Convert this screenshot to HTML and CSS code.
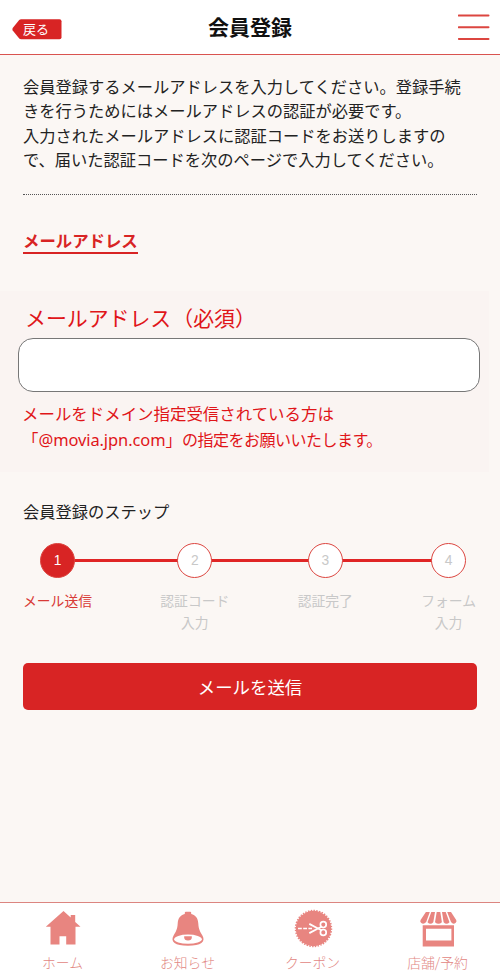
FILE: index.html
```html
<!DOCTYPE html>
<html lang="ja">
<head>
<meta charset="utf-8">
<meta name="viewport" content="width=device-width, initial-scale=1">
<title>会員登録</title>
<link rel="stylesheet" href="styles.css">
</head>
<body>
<header class="header">
  <a class="back" href="#">
    <svg class="back-shape" viewBox="0 0 50 21" aria-hidden="true"><path d="M7.2 1Q8 .2 9.2 .2H47.500Q49.500 .2 49.500 2.200V18.300Q49.500 20.300 47.500 20.300H9.200Q8 20.300 7.200 19.500L.7 11.500Q0 10.300 .7 9Z"/></svg>
    <span class="back-text">戻る</span>
  </a>
  <h1 class="title">会員登録</h1>
  <button class="menu" aria-label="メニュー"><svg viewBox="0 0 32 28" width="32" height="28"><path d="M.8 2.500H30.500M.8 14.200H30.500M.8 25.900H30.500"/></svg></button>
</header>
<main class="main">
  <p class="intro">会員登録するメールアドレスを入力してください。登録手続<br>きを行うためにはメールアドレスの認証が必要です。<br>入力されたメールアドレスに認証コードをお送りしますの<br>で、届いた認証コードを次のページで入力してください。</p>
  <h2 class="section-title">メールアドレス</h2>
  <section class="panel">
    <label class="label" for="mail">メールアドレス<span class="required">（必須）</span></label>
    <input class="input" id="mail" type="email">
    <p class="hint">メールをドメイン指定受信されている方は<br>「<span class="domain">@movia.jpn.com</span>」<span class="tight">の指定をお願いいたします。</span></p>
  </section>
  <h3 class="steps-title">会員登録のステップ</h3>
  <ol class="steps">
    <li class="step current"><span class="num">1</span><span class="name">メール送信</span></li>
    <li class="step"><span class="num">2</span><span class="name">認証コード<br>入力</span></li>
    <li class="step"><span class="num">3</span><span class="name">認証完了</span></li>
    <li class="step"><span class="num">4</span><span class="name">フォーム<br>入力</span></li>
  </ol>
  <button class="submit">メールを送信</button>
</main>
<nav class="tabs">
  <a class="tab" href="#">
    <svg class="icon" viewBox="0 0 40 40"><path d="M20.500 3 2.800 18.700H7.500V36.600H16.500V28.300H23.200V36.600H32.500V18.700H37.500L32.200 14V7H27.700V9.500Z"/></svg>
    <span>ホーム</span>
  </a>
  <a class="tab" href="#">
    <svg class="icon" viewBox="0 0 40 40"><path d="M16.800 6V4.700Q16.800 3.700 17.800 3.700H22.200Q23.200 3.700 23.200 4.700V6C27.800 7.200 30 10.500 30.300 15.500C30.600 21 32 23.500 34.400 27.500C38 34 33 37.700 20 37.700S2 34 5.600 27.500C8 23.500 9.400 21 9.700 15.500C10 10.500 12.200 7.200 16.800 6Z"/><ellipse class="cut" cx="20" cy="31.200" rx="13.800" ry="4.600"/><path d="M16.200 28.300H23.800V29.300A3.800 3.200 0 0 1 16.200 29.300Z"/></svg>
    <span>お知らせ</span>
  </a>
  <a class="tab" href="#">
    <svg class="icon" viewBox="0 0 40 40"><circle cx="20.500" cy="20.500" r="17.700"/><circle class="teeth" cx="20.500" cy="20.500" r="18" pathLength="80"/><path class="cutline" d="M5 20.500H8.800M10.200 20.500H14M15.400 20.500H19"/><path class="scissors" d="M16.300 15.900 25 20.500 29 22.500M16.300 25.100 25 20.500 29 18.500"/><ellipse class="loops" cx="30.300" cy="16.600" rx="2.900" ry="2.900"/><ellipse class="loops" cx="30.300" cy="24.400" rx="2.900" ry="2.900"/></svg>
    <span>クーポン</span>
  </a>
  <a class="tab" href="#">
    <svg class="icon" viewBox="0 0 40 40"><path d="M7.900 4H11.800L8.200 14Q5.500 17 3 14.800Q1.700 13.500 2.600 12ZM13.300 4H17L15.300 14.200Q12.500 17.300 9.500 14.200ZM18.700 4H22.300L23.900 14.200Q20.400 17.300 17 14.200ZM24 4H27.700L31.500 14.200Q28.500 17.300 25.600 14.200ZM29.200 4H33L38.200 12Q39 13.500 37.700 14.800Q35.200 17 33 14ZM4.700 17.300H36V38.600H4.700ZM8 20.700V32.400H33.400V20.700Z" fill-rule="evenodd"/></svg>
    <span>店舗/予約</span>
  </a>
</nav>
</body>
</html>
```

FILE: styles.css
```css
* { box-sizing: border-box; }
body {
  margin: 0;
  height: 976px;
  display: flex;
  flex-direction: column;
  background: #fbf7f4;
  color: #222;
  font-family: "Noto Sans CJK JP", sans-serif;
  font-size: 16.25px;
}
h1, h2, h3, p, ol { margin: 0; padding: 0; }
button { font-family: inherit; border: 0; padding: 0; }
a { text-decoration: none; }
.header {
  height: 55px;
  flex: none;
  display: grid;
  grid-template-columns: 1fr auto 1fr;
  align-items: center;
  padding: 0 10px 0 12px;
  background: #fff;
  border-bottom: 1.500px solid #d9534f;
}
.back { display: grid; width: 50px; height: 21px; margin-top: 4px; }
.back-shape { grid-area: 1 / 1; width: 50px; height: 21px; fill: #d82424; }
.back-text {
  grid-area: 1 / 1;
  position: relative;
  padding-left: 11px;
  color: #fff;
  font-size: 13px;
  line-height: 20px;
}
.title { font-size: 21px; line-height: 30px; font-weight: 700; color: #111; margin: 0 2px 3px 0; }
.menu { justify-self: end; width: 32px; height: 28px; background: none; }
.menu svg { display: block; fill: none; stroke: #dc4640; stroke-width: 2; stroke-linecap: round; }
.main { flex: 1; }
.intro {
  margin: 0 23px;
  padding: 18.500px 0 22px;
  line-height: 24.500px;
  white-space: nowrap;
  border-bottom: 1.500px dotted #555;
}
.section-title {
  width: max-content;
  margin: 33px 0 0 23px;
  font-size: 16.400px;
  line-height: 24px;
  color: #d82424;
  border-bottom: 2px solid #d82424;
}
.panel {
  width: 489px;
  height: 181px;
  margin-top: 37.500px;
  padding: 11px 9px 0 18px;
  background: #faf4f2;
  color: #e01519;
}
.label { display: block; margin-left: 7px; font-size: 20.900px; line-height: 30px; }
.required { margin-left: 1px; }
.input {
  display: block;
  width: 462px;
  height: 54px;
  margin-top: 6px;
  padding: 0 16px;
  background: #fff;
  border: 1px solid #777;
  border-radius: 15px;
  font-size: 18px;
}
.hint { margin: 8px 0 0 4px; font-size: 16.450px; line-height: 26px; white-space: nowrap; }
.domain { font-family: "Noto Sans", sans-serif; letter-spacing: -.08px; }
.tight { font-size: 16px; letter-spacing: -.5px; }
.steps-title { margin: 27px 0 0 23px; font-size: 16.250px; line-height: 24px; font-weight: 400; }
.steps {
  position: relative;
  display: flex;
  justify-content: space-between;
  margin: 20px 24px 0 23px;
  list-style: none;
}
.steps::before {
  content: "";
  position: absolute;
  top: 16.300px;
  left: 36px;
  right: 30px;
  height: 2.500px;
  background: #e02525;
}
.step {
  position: relative;
  display: flex;
  flex-direction: column;
  align-items: center;
  color: #c8c8c8;
  font-size: 13.800px;
  line-height: 22px;
  text-align: center;
}
.num {
  width: 35px;
  height: 35px;
  border: 1px solid #dc4640;
  border-radius: 50%;
  background: #fff;
  font-family: "Liberation Sans", sans-serif;
  line-height: 34px;
}
.name { margin-top: 11px; }
.current { color: #d83a36; }
.current .num { background: #d82424; color: #fff; }
.submit {
  display: block;
  width: 454px;
  height: 47px;
  margin: 30px 0 0 23px;
  padding-bottom: 1px;
  border-radius: 5px;
  background: #d82424;
  color: #fff;
  font-size: 17.400px;
}
.tabs {
  display: grid;
  grid-template-columns: repeat(4, 1fr);
  height: 74px;
  flex: none;
  background: #fff;
  border-top: 1px solid #dc8580;
}
.tab {
  display: flex;
  flex-direction: column;
  align-items: center;
  padding-top: 5px;
  color: #e28783;
  font-size: 13.800px;
  line-height: 20px;
  font-weight: 300;
}
.tab span { margin-top: 4px; }
.icon { width: 40px; height: 40px; fill: #e88580; }
.icon .cut { fill: #fff; }
.icon .teeth { fill: none; stroke: #e88580; stroke-width: 1.500; stroke-dasharray: 1 1; }
.icon .cutline { fill: none; stroke: #fff; stroke-width: 1.300; }
.icon .scissors { fill: none; stroke: #fff; stroke-width: 1.900; }
.icon .loops { fill: none; stroke: #fff; stroke-width: 1.700; }
```
